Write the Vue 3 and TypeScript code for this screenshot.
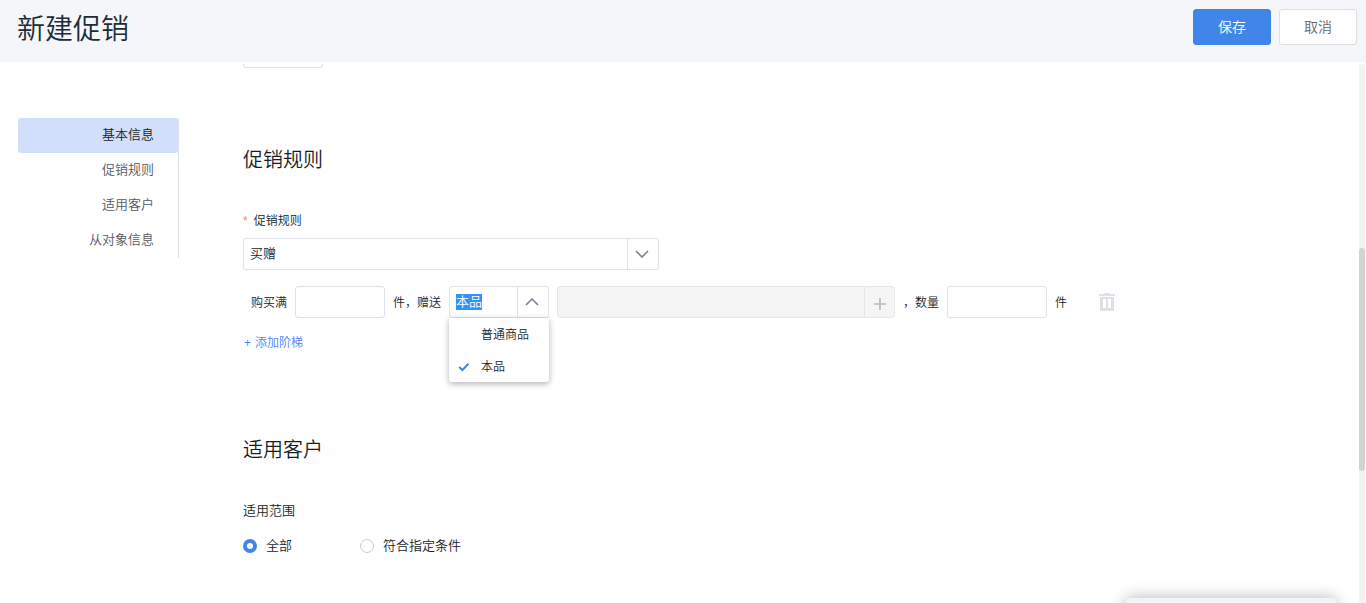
<script setup lang="ts">
import { onMounted, ref } from 'vue'

interface Section {
  id: string
  label: string
}

const sections: Section[] = [
  { id: 'basic', label: '基本信息' },
  { id: 'rules', label: '促销规则' },
  { id: 'customers', label: '适用客户' },
  { id: 'related', label: '从对象信息' },
]
const activeSection = ref('basic')

const ruleTypes = ['买赠', '满减', '折扣']
const ruleType = ref('买赠')

const giftTypes = ['普通商品', '本品']
const giftType = ref('本品')
const giftOpen = ref(true)
const giftInput = ref<HTMLInputElement | null>(null)

const buyCount = ref('')
const giftCount = ref('')

const scopes = ['全部', '符合指定条件']
const scope = ref('全部')

function pickGift(option: string) {
  giftType.value = option
  giftOpen.value = false
}

onMounted(() => {
  giftInput.value?.focus({ preventScroll: true })
  giftInput.value?.select()
})
</script>

<template>
  <div class="page">
    <header class="header">
      <h1 class="title">新建促销</h1>
      <button type="button" class="btn btn-primary">保存</button>
      <button type="button" class="btn">取消</button>
    </header>

    <div class="body">
      <nav class="nav">
        <a
          v-for="s in sections"
          :key="s.id"
          :href="'#' + s.id"
          class="nav-item"
          :class="{ active: s.id === activeSection }"
          @click="activeSection = s.id"
          >{{ s.label }}</a
        >
      </nav>

      <main class="form">
        <input class="field clipped" type="text" aria-label="基本信息" />

        <section id="rules" class="section">
          <h2 class="heading">促销规则</h2>
          <label class="label" for="rule-type"><span class="required">*</span>促销规则</label>
          <div class="combo rule-combo">
            <select id="rule-type" v-model="ruleType" class="combo-select">
              <option v-for="r in ruleTypes" :key="r">{{ r }}</option>
            </select>
            <span class="combo-arrow">
              <svg width="14" height="8" viewBox="0 0 14 8"><path d="M1 1l6 6 6-6" /></svg>
            </span>
          </div>

          <div class="tier">
            <label for="buy-count">购买满</label>
            <input id="buy-count" v-model="buyCount" class="field buy-count" type="text" />
            <label for="gift-type">件，赠送</label>
            <div class="combo gift-combo">
              <input
                id="gift-type"
                ref="giftInput"
                v-model="giftType"
                class="combo-input"
                type="text"
                role="combobox"
                aria-controls="gift-menu"
                :aria-expanded="giftOpen"
              />
              <button type="button" class="combo-arrow" aria-label="展开选项" @click="giftOpen = !giftOpen">
                <svg width="14" height="8" viewBox="0 0 14 8"><path d="M1 7l6-6 6 6" /></svg>
              </button>
              <ul v-show="giftOpen" id="gift-menu" class="menu" role="listbox">
                <li
                  v-for="g in giftTypes"
                  :key="g"
                  class="menu-item"
                  role="option"
                  :aria-selected="g === giftType"
                  @click="pickGift(g)"
                >
                  <svg v-if="g === giftType" class="check" width="12" height="10" viewBox="0 0 12 10">
                    <path d="M1.2 5l3.2 3L10.5 1.8" />
                  </svg>
                  {{ g }}
                </li>
              </ul>
            </div>
            <div class="combo product-combo">
              <input class="combo-input" type="text" aria-label="赠品" disabled />
              <button type="button" class="combo-arrow" aria-label="选择赠品" disabled>
                <svg class="plus" width="14" height="14" viewBox="0 0 14 14"><path d="M7 1v12M1 7h12" /></svg>
              </button>
            </div>
            <label for="gift-count">，数量</label>
            <input id="gift-count" v-model="giftCount" class="field gift-count" type="text" />
            <span>件</span>
            <button type="button" class="trash" aria-label="删除">
              <svg width="16" height="18" viewBox="0 0 16 18">
                <path
                  fill-rule="evenodd"
                  d="M5 0h6v1h5v2H0V1h5zM1 4h14v13a1 1 0 0 1-1 1H2a1 1 0 0 1-1-1zM4 6v9h3V6zM9 6v9h3V6z"
                />
              </svg>
            </button>
          </div>

          <button type="button" class="add-tier"><span>+</span>添加阶梯</button>
        </section>

        <section id="customers" class="section customers">
          <h2 class="heading">适用客户</h2>
          <div id="scope-label" class="label scope-label">适用范围</div>
          <div class="radios" role="radiogroup" aria-labelledby="scope-label">
            <label v-for="s in scopes" :key="s" class="radio">
              <input v-model="scope" type="radio" name="scope" :value="s" />{{ s }}
            </label>
          </div>
        </section>
      </main>

      <div class="scrollbar"><div class="thumb"></div></div>
    </div>
    <div class="dock"></div>
  </div>
</template>

<style>
body {
  overflow: hidden;
}
</style>

<style scoped>
.page {
  position: relative;
  display: flex;
  flex-direction: column;
  gap: 2px;
  height: 100vh;
  overflow: hidden;
  background: #fff;
  color: #181c25;
  font: 350 12px/20px 'Liberation Sans', 'Noto Sans CJK SC', sans-serif;
}
.page *,
.page *::before {
  box-sizing: border-box;
}
button,
input,
select {
  margin: 0;
  padding: 0;
  border: 0;
  border-radius: 0;
  background: none;
  color: inherit;
  font: inherit;
  outline: none;
}
svg {
  display: block;
  fill: none;
}
.header {
  display: flex;
  align-items: flex-start;
  gap: 8px;
  flex: none;
  height: 62px;
  padding: 9px 9px 0 17px;
  background: #f4f6fa;
}
.title {
  flex: 1;
  margin: 0;
  color: #212b36;
  font-size: 28px;
  font-weight: 350;
  line-height: 42px;
}
.btn {
  width: 78px;
  height: 36px;
  border: 1px solid #dcdee0;
  border-radius: 3px;
  background: #fff;
  color: #666;
  font-size: 14px;
}
.btn-primary {
  border-color: #4086e9;
  background: #4086e9;
  color: #fff;
}
.body {
  display: flex;
  flex: 1;
  min-height: 0;
  overflow: hidden;
  padding: 0 1px 0 18px;
}
.nav {
  display: flex;
  flex: none;
  flex-direction: column;
  align-self: flex-start;
  width: 161px;
  margin: 54px 64px 0 0;
  border-right: 1px solid #dee1e8;
}
.nav-item {
  height: 35px;
  padding-right: 24px;
  border-radius: 3px;
  color: #545861;
  font-size: 13px;
  line-height: 34px;
  text-align: right;
  text-decoration: none;
}
.nav-item.active {
  background: #d1dffa;
  color: #181c25;
}
.form {
  flex: 1;
  min-width: 0;
}
.field {
  height: 32px;
  padding: 0 6px;
  border: 1px solid #dee1e8;
  border-radius: 3px;
  background: #fff;
  font-size: 13px;
}
.clipped {
  display: block;
  width: 80px;
  margin-top: -28px;
}
.section {
  margin-top: 76px;
}
.customers {
  margin-top: 81px;
}
.heading {
  margin: 0;
  font-size: 20px;
  font-weight: 350;
  line-height: 32px;
}
.label {
  display: block;
  margin: 35px 0 7px;
}
.scope-label {
  margin-bottom: 15px;
  font-size: 13px;
}
.required {
  margin-right: 6px;
  color: #ff8080;
}
.combo {
  position: relative;
  display: flex;
  height: 32px;
  border: 1px solid #dee1e8;
  border-radius: 3px;
  background: #fff;
}
.rule-combo {
  width: 416px;
}
.combo-select,
.combo-input {
  flex: 1;
  min-width: 0;
  padding: 0 6px;
  font-size: 13px;
  line-height: 16px;
}
.combo-select {
  appearance: none;
}
.combo-input::selection {
  background: #3390ff;
  color: #fff;
}
.combo-arrow {
  display: flex;
  flex: none;
  align-items: center;
  justify-content: center;
  width: 31px;
  padding-right: 2px;
  border-left: 1px solid #dee1e8;
}
.combo-arrow path {
  stroke: #7b8292;
  stroke-width: 1.6;
}
.tier {
  display: flex;
  align-items: center;
  gap: 8px;
  margin-top: 16px;
  padding-left: 8px;
  line-height: 18px;
  white-space: nowrap;
}
.tier > label,
.tier > span {
  padding-top: 2px;
}
.buy-count {
  width: 90px;
}
.gift-count {
  width: 100px;
}
.gift-combo {
  width: 100px;
}
.product-combo {
  width: 338px;
  border-color: #e4e6ea;
  background: #f5f5f5;
}
.product-combo .combo-arrow {
  width: 30px;
  padding: 4px 0 0;
  border-color: #e4e6ea;
}
.product-combo path {
  stroke: #b4b8c0;
}
.menu {
  position: absolute;
  z-index: 2;
  top: 31px;
  left: -1px;
  width: 100px;
  margin: 0;
  padding: 0;
  border-radius: 0 0 3px 3px;
  background: #fff;
  box-shadow: 0 2px 6px rgba(0, 0, 0, 0.3);
  list-style: none;
}
.menu-item {
  position: relative;
  height: 32px;
  padding-left: 32px;
  line-height: 34px;
}
.check {
  position: absolute;
  top: 12px;
  left: 9px;
}
.check path {
  stroke: #4086e9;
  stroke-width: 2;
}
.trash {
  margin-left: 24px;
}
.trash path {
  fill: #dee1e8;
}
.add-tier {
  display: flex;
  gap: 4px;
  margin-top: 15px;
  padding-left: 1px;
  color: #4d83ff;
}
.radios {
  display: flex;
  gap: 68px;
}
.radio {
  display: flex;
  align-items: center;
  gap: 9px;
  font-size: 13px;
}
.radio input {
  width: 14px;
  height: 14px;
  border: 1px solid #ccc;
  border-radius: 50%;
  appearance: none;
}
.radio input:checked {
  border: 4px solid #4086e9;
}
.scrollbar {
  flex: none;
  width: 6px;
  border-radius: 3px 3px 0 0;
  background: #f2f2f2;
}
.thumb {
  height: 223px;
  margin-top: 184px;
  border-radius: 3px;
  background: #d3d3d3;
}
.dock {
  position: absolute;
  right: 30px;
  bottom: -35px;
  width: 210px;
  height: 40px;
  border-radius: 4px;
  background: #f3f4f7;
  box-shadow: 0 0 16px rgba(0, 0, 0, 0.3);
}
</style>
